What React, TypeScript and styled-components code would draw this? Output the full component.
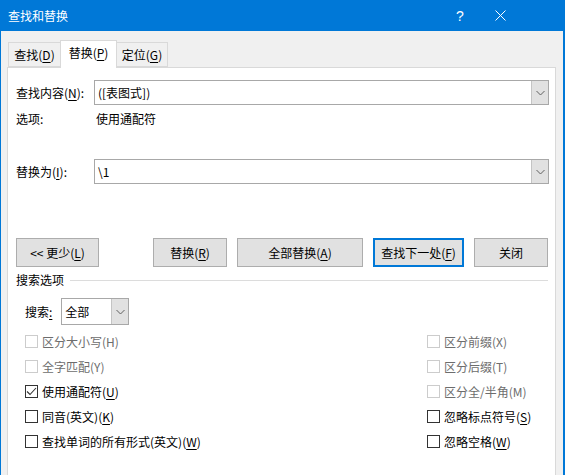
import React from "react";
import styled, { createGlobalStyle } from "styled-components";

const Global = createGlobalStyle`
  html, body { margin: 0; padding: 0; background: #f0f0f0; }
  body {
    font-family: "Noto Sans CJK SC", "Noto Sans", "Liberation Sans", sans-serif;
    font-size: 12px;
    color: #000;
  }
  * { box-sizing: border-box; }
`;

const Window = styled.div`
  width: 565px;
  height: 475px;
  overflow: hidden;
  display: flex;
  flex-direction: column;
  background: #f0f0f0;
  border-left: 1px solid #0078d7;
  border-right: 2px solid #0078d7;
`;

const TitleBar = styled.div`
  height: 31px;
  flex: none;
  background: #0078d7;
  color: #fff;
  display: flex;
  align-items: center;
  padding: 0 43px 0 7px;
`;

const Title = styled.div`
  flex: 1;
  font-size: 12px;
  line-height: 16px;
`;

const TitleButton = styled.div`
  width: 40px;
  height: 31px;
  display: flex;
  align-items: center;
  justify-content: center;
  font-family: "Liberation Sans", sans-serif;
  font-size: 14px;
  color: #fff;
`;

const Body = styled.div`
  flex: 1;
  display: flex;
  flex-direction: column;
  padding: 9px 7px 0 6px;
  min-height: 0;
`;

const TabStrip = styled.div`
  height: 27px;
  flex: none;
  display: flex;
  align-items: flex-end;
  padding-left: 1px;
  position: relative;
  z-index: 1;
`;

const Tab = styled.div<{ $active?: boolean; $w: number }>`
  width: ${(p) => p.$w}px;
  height: ${(p) => (p.$active ? 28 : 25)}px;
  margin-bottom: ${(p) => (p.$active ? -1 : 0)}px;
  margin-left: -1px;
  &:first-child { margin-left: 0; }
  border: 1px solid #d9d9d9;
  border-bottom: ${(p) => (p.$active ? "none" : "1px solid #d9d9d9")};
  background: ${(p) => (p.$active ? "#fff" : "#f0f0f0")};
  display: flex;
  align-items: center;
  justify-content: center;
  padding-bottom: ${(p) => (p.$active ? 3 : 0)}px;
  line-height: 16px;
  position: relative;
  z-index: ${(p) => (p.$active ? 2 : 1)};
`;

const Panel = styled.div`
  flex: 1;
  background: #fff;
  border: 1px solid #d9d9d9;
  border-bottom: none;
  padding: 12px 6px 0 8px;
  display: flex;
  flex-direction: column;
`;

const Acc = styled.span`
  text-decoration: underline;
  text-underline-offset: 2px;
`;

const FieldRow = styled.div<{ $mt?: number }>`
  display: grid;
  grid-template-columns: 78px 1fr;
  align-items: center;
  height: 25px;
  margin-top: ${(p) => p.$mt ?? 0}px;
`;

const InfoRow = styled.div`
  display: grid;
  grid-template-columns: 80px 1fr;
  align-items: center;
  height: 28px;
  line-height: 16px;
`;

const Label = styled.div`
  line-height: 16px;
  white-space: nowrap;
`;

const Combo = styled.div<{ $w?: number }>`
  display: flex;
  height: ${(p) => (p.$w ? 27 : 25)}px;
  width: ${(p) => (p.$w ? `${p.$w}px` : "auto")};
  border: 1px solid #a8a8a8;
  background: #fff;
`;

const ComboText = styled.div`
  flex: 1;
  display: flex;
  align-items: center;
  padding-left: 3px;
  line-height: 16px;
  white-space: nowrap;
`;

const ComboButton = styled.div`
  width: 17px;
  flex: none;
  background: #e1e1e1;
  border-left: 1px solid #c4c4c4;
  display: flex;
  align-items: center;
  justify-content: center;
`;

const ButtonRow = styled.div`
  display: flex;
  gap: 10px;
  margin-top: 54px;
  height: 29px;
`;

const Button = styled.div<{ $w: number; $focused?: boolean; $gapAfter?: number }>`
  width: ${(p) => p.$w}px;
  height: 29px;
  margin-right: ${(p) => p.$gapAfter ?? 0}px;
  background: #e1e1e1;
  border: ${(p) => (p.$focused ? "2px solid #0078d7" : "1px solid #adadad")};
  display: flex;
  align-items: center;
  justify-content: center;
  line-height: 16px;
  white-space: nowrap;
`;

const SectionHeader = styled.div`
  display: flex;
  align-items: center;
  height: 26px;
  gap: 6px;
  line-height: 16px;
  &::after {
    content: "";
    flex: 1;
    height: 1px;
    background: #dcdcdc;
    margin-right: 1px;
    margin-top: 1px;
  }
`;

const SearchRow = styled.div`
  display: flex;
  align-items: center;
  margin-top: 5px;
  padding-left: 9px;
  gap: 9px;
`;

const OptionGrid = styled.div`
  display: grid;
  grid-template-columns: 402px 1fr;
  grid-auto-flow: column;
  grid-template-rows: repeat(5, 25px);
  margin-top: 4px;
  padding-left: 9px;
`;

const Option = styled.div<{ $disabled?: boolean }>`
  display: flex;
  align-items: center;
  gap: 4px;
  line-height: 16px;
  white-space: nowrap;
  color: ${(p) => (p.$disabled ? "#6d6d6d" : "#000")};
`;

const Box = styled.div<{ $disabled?: boolean }>`
  width: 13px;
  height: 13px;
  flex: none;
  border: 1px solid ${(p) => (p.$disabled ? "#cccccc" : "#333333")};
  background: #fff;
  display: flex;
  align-items: center;
  justify-content: center;
`;

const Chevron = () => (
  <svg width="9" height="6" viewBox="0 0 9 6">
    <polyline points="0.5,1 4.5,5 8.5,1" fill="none" stroke="#606060" strokeWidth="1" />
  </svg>
);

const Check = () => (
  <svg width="11" height="11" viewBox="0 0 11 11">
    <polyline points="1,5.5 4,8.5 10,2" fill="none" stroke="#333" strokeWidth="1.1" />
  </svg>
);

const CloseIcon = () => (
  <svg width="11" height="11" viewBox="0 0 11 11">
    <path d="M0.5 0.5 L10.5 10.5 M10.5 0.5 L0.5 10.5" stroke="#fff" strokeWidth="1" />
  </svg>
);

type Opt = { label: string; acc: string; disabled?: boolean; checked?: boolean };

const options: Opt[] = [
  { label: "区分大小写", acc: "H", disabled: true },
  { label: "全字匹配", acc: "Y", disabled: true },
  { label: "使用通配符", acc: "U", checked: true },
  { label: "同音(英文)", acc: "K" },
  { label: "查找单词的所有形式(英文)", acc: "W" },
  { label: "区分前缀", acc: "X", disabled: true },
  { label: "区分后缀", acc: "T", disabled: true },
  { label: "区分全/半角", acc: "M", disabled: true },
  { label: "忽略标点符号", acc: "S" },
  { label: "忽略空格", acc: "W" },
];

export default function App() {
  return (
    <>
      <Global />
      <Window>
        <TitleBar>
          <Title>查找和替换</Title>
          <TitleButton>?</TitleButton>
          <TitleButton>
            <CloseIcon />
          </TitleButton>
        </TitleBar>
        <Body>
          <TabStrip>
            <Tab $w={53}>
              查找(<Acc>D</Acc>)
            </Tab>
            <Tab $w={57} $active>
              替换(<Acc>P</Acc>)
            </Tab>
            <Tab $w={52}>
              定位(<Acc>G</Acc>)
            </Tab>
          </TabStrip>
          <Panel>
            <FieldRow>
              <Label>
                查找内容(<Acc>N</Acc>):
              </Label>
              <Combo>
                <ComboText>([表图式])</ComboText>
                <ComboButton>
                  <Chevron />
                </ComboButton>
              </Combo>
            </FieldRow>
            <InfoRow>
              <Label>选项:</Label>
              <Label>使用通配符</Label>
            </InfoRow>
            <FieldRow $mt={26}>
              <Label>
                替换为(<Acc>I</Acc>):
              </Label>
              <Combo>
                <ComboText>\1</ComboText>
                <ComboButton>
                  <Chevron />
                </ComboButton>
              </Combo>
            </FieldRow>
            <ButtonRow>
              <Button $w={83} $gapAfter={44}>
                &lt;&lt; 更少(<Acc>L</Acc>)
              </Button>
              <Button $w={74}>
                替换(<Acc>R</Acc>)
              </Button>
              <Button $w={126}>
                全部替换(<Acc>A</Acc>)
              </Button>
              <Button $w={91} $focused>
                查找下一处(<Acc>F</Acc>)
              </Button>
              <Button $w={74}>关闭</Button>
            </ButtonRow>
            <SectionHeader>搜索选项</SectionHeader>
            <SearchRow>
              <Label>
                搜索<Acc>:</Acc>
              </Label>
              <Combo $w={68}>
                <ComboText>全部</ComboText>
                <ComboButton>
                  <Chevron />
                </ComboButton>
              </Combo>
            </SearchRow>
            <OptionGrid>
              {options.map((o, i) => (
                <Option key={i} $disabled={o.disabled}>
                  <Box $disabled={o.disabled}>{o.checked && <Check />}</Box>
                  <span>
                    {o.label}({o.disabled ? o.acc : <Acc>{o.acc}</Acc>})
                  </span>
                </Option>
              ))}
            </OptionGrid>
          </Panel>
        </Body>
      </Window>
    </>
  );
}
